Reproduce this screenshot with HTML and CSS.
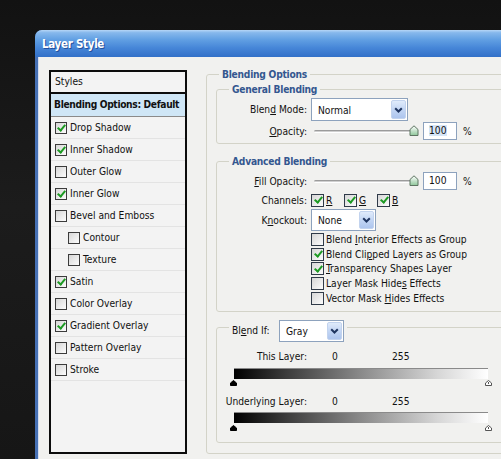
FILE: index.html
```html
<!DOCTYPE html>
<html lang="en">
<head>
    <meta charset="UTF-8">
    <meta name="viewport" content="width=device-width, initial-scale=1.0">
    <title>Layer Style</title>
    <link rel="stylesheet" href="styles.css">
</head>
<body>
    <div class="dialog">
        <div class="titlebar">Layer Style</div>
        <div class="client">
            <div class="styles-list">
                <div class="list-head">Styles</div>
                <div class="list-current">Blending Options: Default</div>
                <ul class="fx">
                    <li><span class="cb on"></span>Drop Shadow</li>
                    <li><span class="cb on"></span>Inner Shadow</li>
                    <li><span class="cb"></span>Outer Glow</li>
                    <li><span class="cb on"></span>Inner Glow</li>
                    <li><span class="cb"></span>Bevel and Emboss</li>
                    <li class="sub"><span class="cb"></span>Contour</li>
                    <li class="sub"><span class="cb"></span>Texture</li>
                    <li><span class="cb on"></span>Satin</li>
                    <li><span class="cb"></span>Color Overlay</li>
                    <li><span class="cb on"></span>Gradient Overlay</li>
                    <li><span class="cb"></span>Pattern Overlay</li>
                    <li><span class="cb"></span>Stroke</li>
                </ul>
            </div>

            <div class="options">
                <fieldset class="group outer">
                    <legend>Blending Options</legend>

                    <fieldset class="group general">
                        <legend>General Blending</legend>
                        <div class="row mt2">
                            <label>Blen<u>d</u> Mode:</label>
                            <div class="select mode"><span>Normal</span>
                                <i class="btn"><svg width="9" height="6" viewBox="0 0 9 6"><path d="M1.2 1.2 4.5 4.5 7.8 1.2" fill="none" stroke="#1f3560" stroke-width="2"/></svg></i>
                            </div>
                        </div>
                        <div class="row mt1">
                            <label><u>O</u>pacity:</label>
                            <div class="slide">
                                <div class="track"></div>
                                <svg class="thumb" width="10" height="11" viewBox="0 0 10 11">
                                    <defs><linearGradient id="tg1" x1="0" y1="0" x2="0" y2="1"><stop offset="0" stop-color="#ffffff"/><stop offset="1" stop-color="#8fc79a"/></linearGradient></defs>
                                    <path d="M1 4.5 5 .8 9 4.5V10.5H1Z" fill="url(#tg1)" stroke="#5d7461"/>
                                </svg>
                                <div class="num picked"><span>100</span></div>
                                <span class="pct">%</span>
                            </div>
                        </div>
                    </fieldset>

                    <fieldset class="group advanced">
                        <legend>Advanced Blending</legend>
                        <div class="row mt4">
                            <label><u>F</u>ill Opacity:</label>
                            <div class="slide">
                                <div class="track"></div>
                                <svg class="thumb" width="10" height="11" viewBox="0 0 10 11">
                                    <defs><linearGradient id="tg2" x1="0" y1="0" x2="0" y2="1"><stop offset="0" stop-color="#ffffff"/><stop offset="1" stop-color="#8fc79a"/></linearGradient></defs>
                                    <path d="M1 4.5 5 .8 9 4.5V10.5H1Z" fill="url(#tg2)" stroke="#5d7461"/>
                                </svg>
                                <div class="num"><span>100</span></div>
                                <span class="pct">%</span>
                            </div>
                        </div>
                        <div class="row mt3">
                            <label>Channels:</label>
                            <div class="chans">
                                <span class="chan"><span class="cb big on"></span><u>R</u></span>
                                <span class="chan"><span class="cb big on"></span><u>G</u></span>
                                <span class="chan"><span class="cb big on"></span><u>B</u></span>
                            </div>
                        </div>
                        <div class="row mt2">
                            <label>K<u>n</u>ockout:</label>
                            <div class="select knock"><span>None</span>
                                <i class="btn"><svg width="9" height="6" viewBox="0 0 9 6"><path d="M1.2 1.2 4.5 4.5 7.8 1.2" fill="none" stroke="#1f3560" stroke-width="2"/></svg></i>
                            </div>
                        </div>
                        <div class="checks">
                            <div class="chk"><span class="cb big"></span><span>Blend <u>I</u>nterior Effects as Group</span></div>
                            <div class="chk"><span class="cb big on"></span><span>Blend Cli<u>p</u>ped Layers as Group</span></div>
                            <div class="chk"><span class="cb big on"></span><span><u>T</u>ransparency Shapes Layer</span></div>
                            <div class="chk"><span class="cb big"></span><span>Layer Mask Hide<u>s</u> Effects</span></div>
                            <div class="chk"><span class="cb big"></span><span>Vector Mask <u>H</u>ides Effects</span></div>
                        </div>
                    </fieldset>

                    <fieldset class="group blendif">
                        <legend>
                            <span class="bi-label">Bl<u>e</u>nd If:</span><div class="select gray"><span>Gray</span>
                                <i class="btn"><svg width="9" height="6" viewBox="0 0 9 6"><path d="M1.2 1.2 4.5 4.5 7.8 1.2" fill="none" stroke="#1f3560" stroke-width="2"/></svg></i>
                            </div>
                        </legend>
                        <div class="lvl first">
                            <span class="lvl-name">This Layer:</span><span class="lo">0</span><span>255</span>
                        </div>
                        <div class="gbar mt4"></div>
                        <div class="gthumbs mt1">
                            <svg width="7" height="6" viewBox="0 0 7 6"><path d="M.5 3 3.5 .5 6.5 3V5.5H.5Z" fill="#000" stroke="#000"/></svg>
                            <svg width="7" height="6" viewBox="0 0 7 6"><path d="M.5 3 3.5 .5 6.5 3V5.5H.5Z" fill="#fff" stroke="#555"/><path d="M3.5 2v2" stroke="#555"/></svg>
                        </div>
                        <div class="lvl second">
                            <span class="lvl-name">Underlying Layer:</span><span class="lo">0</span><span>255</span>
                        </div>
                        <div class="gbar mt3"></div>
                        <div class="gthumbs mt2">
                            <svg width="7" height="6" viewBox="0 0 7 6"><path d="M.5 3 3.5 .5 6.5 3V5.5H.5Z" fill="#000" stroke="#000"/></svg>
                            <svg width="7" height="6" viewBox="0 0 7 6"><path d="M.5 3 3.5 .5 6.5 3V5.5H.5Z" fill="#fff" stroke="#555"/><path d="M3.5 2v2" stroke="#555"/></svg>
                        </div>
                    </fieldset>
                </fieldset>
            </div>
        </div>
    </div>
</body>
</html>
```

FILE: styles.css
```css
body{
    margin: 0px;
    height: 459px;
    overflow: hidden;
    background: linear-gradient(180deg, #121212 0%, #1c1c1c 45%, #161616 100%);
    font-family: "DejaVu Sans Condensed", "DejaVu Sans", sans-serif;
    font-stretch: condensed;
    font-size: 10.2px;
    color: #111;
}
u{
    text-decoration: underline;
    text-underline-offset: 1px;
}

/* window frame */
.dialog{
    margin: 30px 0px 0px 35px;
    width: 500px;
    border-radius: 7px 0px 0px 0px;
    overflow: hidden;
    background: #4670b4;
}
.titlebar{
    height: 27px;
    line-height: 29px;
    padding-left: 7px;
    color: #fff;
    font-weight: bold;
    font-size: 11.5px;
    letter-spacing: -0.3px;
    text-shadow: 1px 1px 0px #25509c;
    background: linear-gradient(180deg, #b6d6f6 0%, #86b8ec 10%, #62a0e3 35%, #4787d8 65%, #3270c8 100%);
}
.client{
    display: flex;
    align-items: flex-start;
    margin-left: 3px;
    padding: 13px 0px 0px 11px;
    height: 420px;
    background: #f1f1ef;
    box-shadow: inset 1px 0px 0px #d4dcef;
}

/* styles list */
.styles-list{
    flex: none;
    width: 134px;
    height: 380px;
    border: 2px solid #0c0c0c;
    background: #f3f3f3;
}
.list-head{
    height: 20px;
    line-height: 20px;
    padding-left: 4px;
    border-bottom: 2px solid #0c0c0c;
}
.list-current{
    height: 22px;
    line-height: 22px;
    padding-left: 3px;
    font-weight: bold;
    letter-spacing: -0.35px;
    white-space: nowrap;
    background: #cfe6f6;
    border-bottom: 1px solid #8a8a8a;
}
.fx{
    list-style: none;
    margin: 0px;
    padding: 0px;
}
.fx li{
    display: flex;
    align-items: center;
    gap: 3px;
    height: 21px;
    padding-left: 4px;
    border-bottom: 1px solid #e3e3e3;
}
.fx li.sub{
    padding-left: 17px;
}

/* checkboxes */
.cb{
    position: relative;
    flex: none;
    width: 10px;
    height: 10px;
    border: 1px solid #3b3b3b;
    background: linear-gradient(135deg, #d6d6d6, #fcfcfc);
}
.cb.big{
    width: 11px;
    height: 11px;
    border-color: #2f3a48;
}
.cb.on::after{
    content: "";
    position: absolute;
    left: 3px;
    top: 0px;
    width: 3px;
    height: 6px;
    border: solid #1d9a23;
    border-width: 0px 2px 2px 0px;
    transform: rotate(40deg);
}
.cb.big.on::after{
    left: 3.5px;
    top: 0.5px;
}

/* right panel */
.options{
    flex: none;
    margin: -2px 0px 0px 19px;
    width: 340px;
}
fieldset.group{
    margin: 0px;
    padding: 0px;
    border: 1px solid #d3d3c8;
    border-radius: 3px;
    min-width: 0px;
}
fieldset.group legend{
    margin-left: 12px;
    padding: 0px 3px;
    line-height: 13px;
    color: #34578f;
    font-weight: bold;
    letter-spacing: -0.25px;
}
.outer{
    padding: 0px 12px 10px 9px !important;
}
.outer > legend{
    margin-left: 3px !important;
}
.general{
    margin-top: 2px !important;
    padding-bottom: 3px !important;
}
.advanced{
    margin-top: 11px !important;
    padding-bottom: 5px !important;
}
.blendif{
    margin-top: 2px !important;
    padding-bottom: 11px !important;
}
.blendif legend{
    padding-top: 6px !important;
    color: #111 !important;
    font-weight: normal !important;
    letter-spacing: 0px !important;
}

.row{
    display: flex;
    align-items: center;
}
.row > label{
    flex: none;
    width: 90px;
    margin-right: 4px;
    text-align: right;
}
.mt1{ margin-top: 1px; }
.mt2{ margin-top: 2px; }
.mt3{ margin-top: 3px; }
.mt4{ margin-top: 4px; }

/* dropdowns */
.select{
    display: inline-flex;
    vertical-align: middle;
    box-sizing: border-box;
    border: 1px solid #8da2bd;
    background: #fff;
}
.select > span{
    flex: 1;
    padding-left: 6px;
    align-self: center;
    padding-top: 1px;
}
.select .btn{
    display: flex;
    align-items: center;
    justify-content: center;
    width: 13px;
    margin: 1px;
    border: 1px solid #c2d3ee;
    border-radius: 2px;
    background: linear-gradient(180deg, #e0ebfb 0%, #c3d6f4 50%, #adc5ee 100%);
}
.mode{
    width: 97px;
    height: 23px;
}
.knock{
    width: 65px;
    height: 22px;
}
.gray{
    width: 65px;
    height: 22px;
}

/* sliders */
.slide{
    display: flex;
    align-items: center;
}
.track{
    margin-left: 3px;
    width: 98px;
    height: 1px;
    border-top: 1px solid #9b9b9b;
    border-bottom: 1px solid #fff;
    background: #cfcfcf;
    border-radius: 2px 0px 0px 2px;
}
.thumb{
    margin-left: -3px;
    margin-top: -1px;
}
.num{
    margin-left: 4px;
    box-sizing: border-box;
    width: 34px;
    height: 18px;
    padding: 2px 0px 0px 5px;
    border: 1px solid #8da2bd;
    background: #fff;
}
.num.picked span{
    background: #d6e6f7;
}
.pct{
    margin-left: 6px;
}

.chans{
    display: flex;
}
.chan{
    display: flex;
    align-items: center;
    gap: 2px;
    width: 33px;
    height: 14px;
}
.checks{
    margin: 1px 0px 0px 94px;
}
.chk{
    display: flex;
    align-items: center;
    gap: 2px;
    height: 14.75px;
    white-space: nowrap;
}

/* blend if */
.bi-label{
    display: inline-block;
    width: 44px;
    vertical-align: middle;
}
.gray{
    margin-left: 3px;
}
.lvl{
    display: grid;
    grid-template-columns: 90px 85px auto;
    height: 14px;
    line-height: 14px;
}
.lvl-name{
    text-align: right;
}
.lo{
    padding-left: 25px;
}
.lvl.first{
    margin-top: 8px;
}
.lvl.second{
    margin-top: 9px;
}
.gbar{
    margin-left: 17px;
    box-sizing: border-box;
    width: 254px;
    height: 11px;
    border-top: 1px solid #8a8a8a;
    background: linear-gradient(90deg, #000 0%, #3a3a3a 20%, #8a8a8a 50%, #d6d6d6 80%, #fff 100%);
}
.gthumbs{
    display: flex;
    justify-content: space-between;
    margin-left: 13px;
    width: 262px;
    height: 6px;
}
.gthumbs svg{
    display: block;
}
```
